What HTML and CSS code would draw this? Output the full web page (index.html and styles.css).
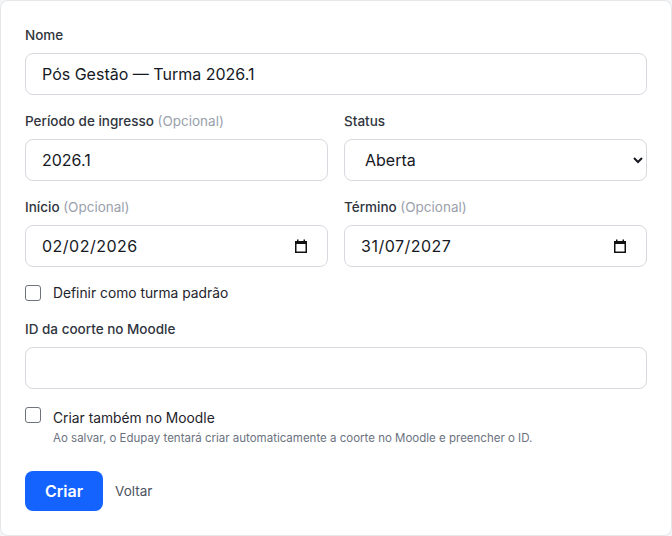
FILE: index.html
```html
<!DOCTYPE html>
<html lang="pt-BR">
<head>
<meta charset="utf-8">
<title>Nova turma</title>
<link rel="stylesheet" href="styles.css">
</head>
<body>
<form class="card">
  <div class="field">
    <label class="label" for="nome">Nome</label>
    <input class="control" id="nome" type="text" value="Pós Gestão — Turma 2026.1">
  </div>
  <div class="row">
    <div class="field">
      <label class="label" for="periodo">Período de ingresso <span class="opt">(Opcional)</span></label>
      <input class="control" id="periodo" type="text" value="2026.1">
    </div>
    <div class="field">
      <label class="label" for="status">Status</label>
      <select class="control select" id="status">
        <option selected>Aberta</option>
        <option>Fechada</option>
      </select>
    </div>
  </div>
  <div class="row">
    <div class="field">
      <label class="label" for="inicio">Início <span class="opt">(Opcional)</span></label>
      <div class="control date">
        <input class="date-input" id="inicio" type="text" value="02/02/2026">
        <svg class="cal" width="16" height="16" viewBox="0 0 16 16" aria-hidden="true">
          <rect x="2.75" y="3.75" width="10.5" height="10.5" fill="none" stroke="#111" stroke-width="1.5"/>
          <rect x="2" y="3" width="12" height="3" fill="#111"/>
          <rect x="4" y="1.5" width="1.5" height="2" fill="#111"/>
          <rect x="10.5" y="1.5" width="1.5" height="2" fill="#111"/>
        </svg>
      </div>
    </div>
    <div class="field">
      <label class="label" for="termino">Término <span class="opt">(Opcional)</span></label>
      <div class="control date">
        <input class="date-input" id="termino" type="text" value="31/07/2027">
        <svg class="cal" width="16" height="16" viewBox="0 0 16 16" aria-hidden="true">
          <rect x="2.75" y="3.75" width="10.5" height="10.5" fill="none" stroke="#111" stroke-width="1.5"/>
          <rect x="2" y="3" width="12" height="3" fill="#111"/>
          <rect x="4" y="1.5" width="1.5" height="2" fill="#111"/>
          <rect x="10.5" y="1.5" width="1.5" height="2" fill="#111"/>
        </svg>
      </div>
    </div>
  </div>
  <label class="check">
    <input type="checkbox" class="box">
    <span class="check-text">Definir como turma padrão</span>
  </label>
  <div class="field">
    <label class="label" for="moodle">ID da coorte no Moodle</label>
    <input class="control" id="moodle" type="text">
  </div>
  <label class="check check-top">
    <input type="checkbox" class="box">
    <span class="check-body">
      <span class="check-text">Criar também no Moodle</span>
      <span class="help">Ao salvar, o Edupay tentará criar automaticamente a coorte no Moodle e preencher o ID.</span>
    </span>
  </label>
  <div class="actions">
    <button type="button" class="btn">Criar</button>
    <a class="link" href="#">Voltar</a>
  </div>
</form>
</body>
</html>
```
FILE: styles.css
```css
* { box-sizing: border-box; }
html, body { margin: 0; padding: 0; background: #f3f4f6; }
body { font-family: Inter, "Noto Sans", sans-serif; color: #1f2937; }
.card {
  width: 672px;
  height: 536px;
  background: #fff;
  border: 1px solid #e5e7eb;
  border-radius: 8px;
  padding: 24px 24px 0 24px;
  display: flex;
  flex-direction: column;
  gap: 16px;
}
.field { display: flex; flex-direction: column; gap: 8px; min-width: 0; }
.row { display: grid; grid-template-columns: 1fr 1fr; gap: 16px; }
.label { font-size: 13.5px; line-height: 20px; font-weight: 500; color: #30353e; }
.opt { color: #9aa1ab; font-weight: 400; }
.control {
  height: 42px;
  width: 100%;
  border: 1px solid #d6d9de;
  border-radius: 8px;
  padding: 0 16px;
  font-family: inherit;
  font-size: 16px;
  color: #16191f;
  background: #fff;
  outline: none;
}
.select { padding-left: 16px; padding-right: 8px; }
.date { display: flex; align-items: center; padding-right: 18px; }
.date-input {
  flex: 1;
  min-width: 0;
  border: none;
  outline: none;
  padding: 0;
  font-family: inherit;
  font-size: 16px;
  letter-spacing: 0.5px;
  color: #16191f;
  background: transparent;
}
.cal { flex: none; }
.check { display: flex; align-items: center; gap: 12px; height: 20px; cursor: pointer; }
.check-top { align-items: flex-start; height: auto; }
.box {
  appearance: none;
  margin: 0;
  width: 16px;
  height: 16px;
  border: 1px solid #6f747c;
  border-radius: 3px;
  background: #fff;
  flex: none;
}
.check-top .box { margin-top: 2px; }
.check-text { font-size: 13.8px; line-height: 20px; color: #1f242c; font-weight: 400; }
.check-body { display: flex; flex-direction: column; padding-top: 2px; }
.check-body .check-text { line-height: 22px; }
.help { font-size: 11.5px; line-height: 18px; color: #6b7280; }
.actions { display: flex; align-items: center; gap: 12px; margin-top: 8px; }
.btn {
  height: 40px;
  padding: 0 20px;
  border: none;
  border-radius: 8px;
  background: #1463ff;
  color: #fff;
  font-family: inherit;
  font-size: 16px;
  font-weight: 600;
}
.link { font-size: 13.5px; color: #4b5260; text-decoration: none; }
```
